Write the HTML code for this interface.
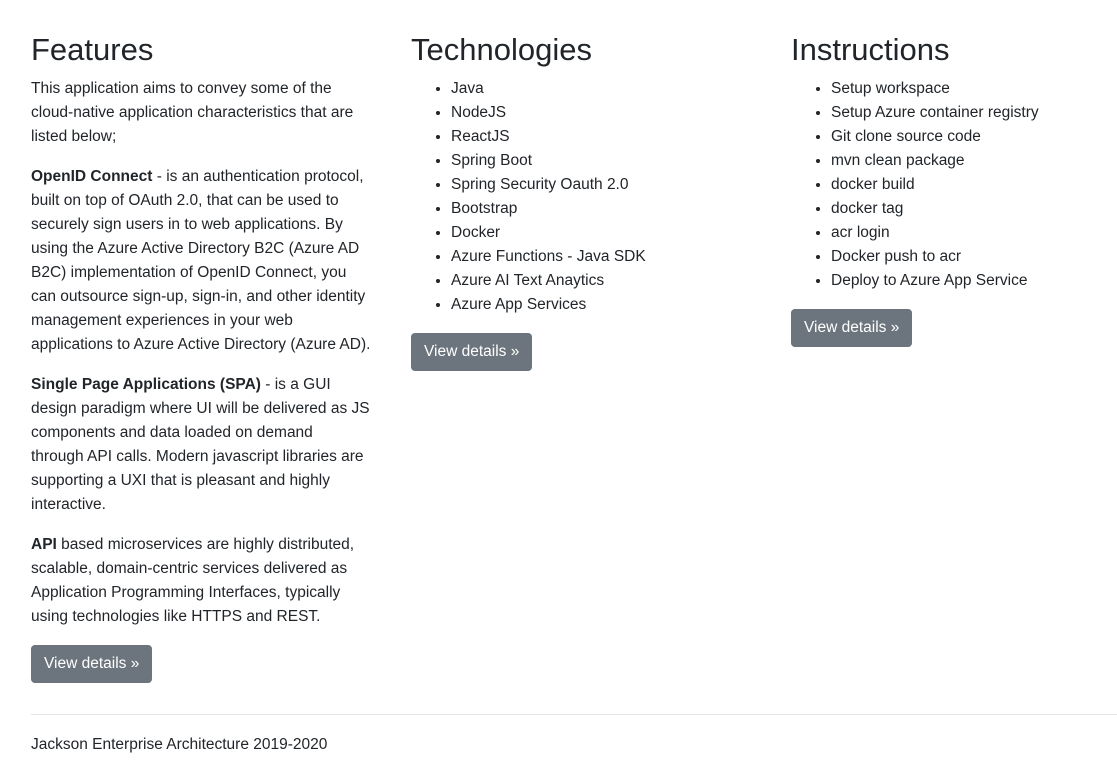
<!DOCTYPE html>
<html><head><meta charset="utf-8"><style>
*{box-sizing:border-box}
body{margin:0;font-family:"Liberation Sans",sans-serif;font-size:15.5px;line-height:24px;color:#212529;background:#fff;width:1117px;height:769px;overflow:hidden}
.row{position:absolute;top:32px;left:31px;display:flex}
.col{width:380px}
h2{font-size:31px;font-weight:500;line-height:38px;margin:-1px 0 8px 0}
p{margin:0 0 16px 0;white-space:nowrap}
ul{margin:0 0 16px 0;padding-left:40px}
li{white-space:nowrap}
.btn{display:inline-block;background:#6c757d;color:#fff;border-radius:4px;height:38px;line-height:38px;padding:0 13px;font-size:15.5px}
hr{position:absolute;top:714px;left:31px;right:0;margin:0;border:0;border-top:1px solid #e5e5e5}
.foot{position:absolute;top:733px;left:31px}
</style></head><body>
<div class="row">
<div class="col">
<h2>Features</h2>
<p>This application aims to convey some of the<br>cloud-native application characteristics that are<br>listed below;</p>
<p><b>OpenID Connect</b> - is an authentication protocol,<br>built on top of OAuth 2.0, that can be used to<br>securely sign users in to web applications. By<br>using the Azure Active Directory B2C (Azure AD<br>B2C) implementation of OpenID Connect, you<br>can outsource sign-up, sign-in, and other identity<br>management experiences in your web<br>applications to Azure Active Directory (Azure AD).</p>
<p><b>Single Page Applications (SPA)</b> - is a GUI<br>design paradigm where UI will be delivered as JS<br>components and data loaded on demand<br>through API calls. Modern javascript libraries are<br>supporting a UXI that is pleasant and highly<br>interactive.</p>
<p><b>API</b> based microservices are highly distributed,<br>scalable, domain-centric services delivered as<br>Application Programming Interfaces, typically<br>using technologies like HTTPS and REST.</p>
<div><span class="btn">View details »</span></div>
</div>
<div class="col">
<h2>Technologies</h2>
<ul><li>Java</li><li>NodeJS</li><li>ReactJS</li><li>Spring Boot</li><li>Spring Security Oauth 2.0</li><li>Bootstrap</li><li>Docker</li><li>Azure Functions - Java SDK</li><li>Azure AI Text Anaytics</li><li>Azure App Services</li></ul>
<div><span class="btn">View details »</span></div>
</div>
<div class="col">
<h2>Instructions</h2>
<ul><li>Setup workspace</li><li>Setup Azure container registry</li><li>Git clone source code</li><li>mvn clean package</li><li>docker build</li><li>docker tag</li><li>acr login</li><li>Docker push to acr</li><li>Deploy to Azure App Service</li></ul>
<div><span class="btn">View details »</span></div>
</div>
</div>
<hr>
<div class="foot">Jackson Enterprise Architecture 2019-2020</div>
</body></html>
